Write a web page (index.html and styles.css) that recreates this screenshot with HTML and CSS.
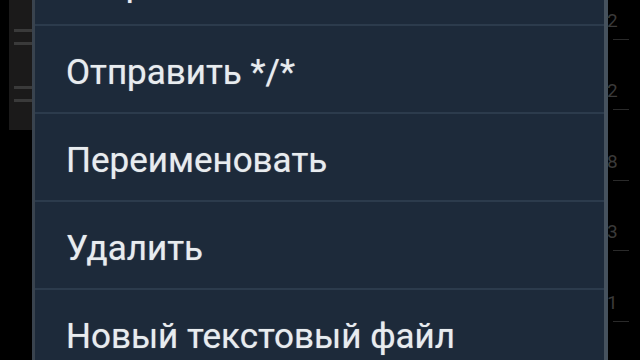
FILE: index.html
```html
<!DOCTYPE html>
<html>
<head>
<meta charset="utf-8">
<link rel="stylesheet" href="styles.css">
</head>
<body>
<div class="screen">
  <div class="side">
    <div class="panel">
      <div class="ham"><span></span><span></span></div>
      <div class="ham"><span></span><span></span></div>
    </div>
  </div>
  <div class="dialog">
    <ul class="menu">
      <li class="item">Открыть</li>
      <li class="item">Отправить */*</li>
      <li class="item">Переименовать</li>
      <li class="item">Удалить</li>
      <li class="item">Новый текстовый файл</li>
    </ul>
  </div>
  <div class="list">
    <div class="entry"><span class="num">2</span><span class="dash"></span></div>
    <div class="entry"><span class="num">2</span><span class="dash"></span></div>
    <div class="entry"><span class="num">8</span><span class="dash"></span></div>
    <div class="entry"><span class="num">3</span><span class="dash"></span></div>
    <div class="entry"><span class="num">1</span><span class="dash"></span></div>
  </div>
</div>
</body>
</html>
```
FILE: styles.css
```css
html, body {
  margin: 0;
  padding: 0;
  background: #000;
  width: 640px;
  height: 360px;
  overflow: hidden;
}
.screen {
  display: flex;
  width: 640px;
  height: 360px;
  overflow: hidden;
  font-family: Roboto, "Noto Sans", sans-serif;
}
.side {
  width: 32px;
  flex: none;
  padding-left: 9px;
  box-sizing: border-box;
}
.panel {
  height: 130px;
  background: #1b1a1a;
  display: flex;
  flex-direction: column;
  padding-top: 29px;
  gap: 41px;
  box-sizing: border-box;
}
.ham {
  display: flex;
  flex-direction: column;
  gap: 10px;
  padding-left: 5px;
}
.ham span {
  display: block;
  height: 3px;
  background: #3a3a3a;
}
.dialog {
  width: 576px;
  flex: none;
  background: #1d2a3a;
  border-left: 3px solid #39434e;
  border-right: 4px solid #46525e;
  box-sizing: border-box;
  overflow: hidden;
}
.menu {
  list-style: none;
  margin: -62px 0 0 0;
  padding: 0;
}
.item {
  height: 88px;
  box-sizing: border-box;
  border-bottom: 2px solid #2c3b4c;
  display: flex;
  align-items: center;
  padding-left: 31px;
  padding-top: 6px;
  color: #e8ecef;
  font-size: 35px;
  white-space: nowrap;
  text-shadow: 0 0 1px rgba(232, 236, 239, 0.6);
}
.list {
  flex: 1;
  display: flex;
  flex-direction: column;
  padding-top: 8px;
}
.entry {
  height: 73.5px;
  display: flex;
  flex-direction: column;
  margin-left: -1px;
}
.num {
  color: #3a3a3a;
  font-size: 19px;
  line-height: 26px;
}
.dash {
  display: block;
  width: 16px;
  height: 1px;
  margin-left: 6px;
  margin-top: 5px;
  background: #2a2a2a;
}
```
